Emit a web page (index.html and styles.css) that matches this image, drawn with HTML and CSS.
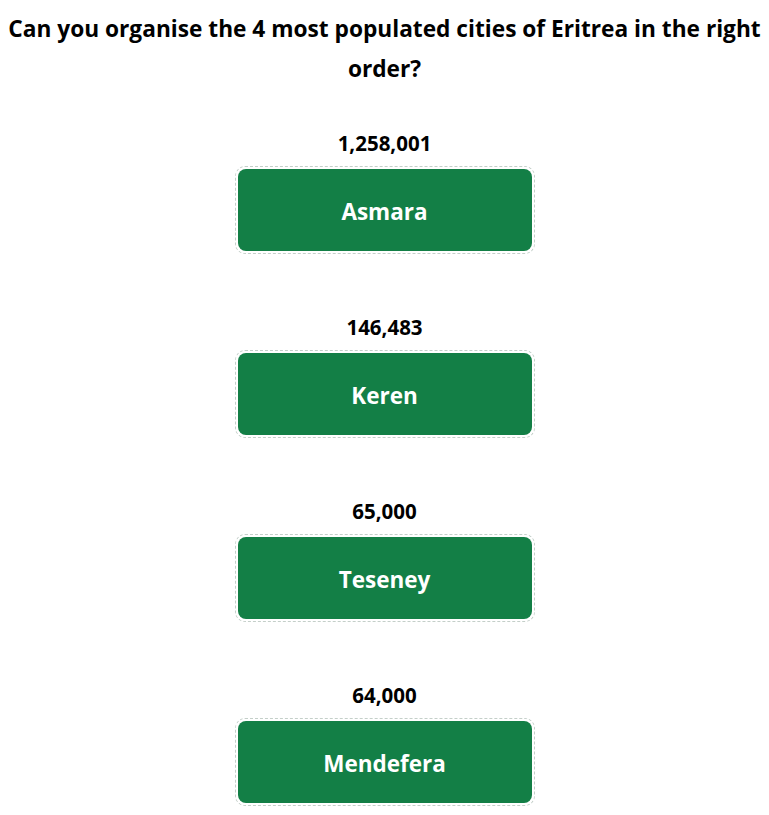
FILE: index.html
```html
<!DOCTYPE html>
<html lang="en">
<head>
    <meta charset="UTF-8">
    <title>Eritrea cities</title>
    <link rel="stylesheet" href="styles.css">
</head>
<body>
    <h2 class="title">Can you organise the 4 most populated cities of Eritrea in the right order?</h2>

    <ul class="list">
        <li class="item">
            <div class="count">1,258,001</div>
            <div class="slot"><div class="city">Asmara</div></div>
        </li>
        <li class="item">
            <div class="count">146,483</div>
            <div class="slot"><div class="city">Keren</div></div>
        </li>
        <li class="item">
            <div class="count">65,000</div>
            <div class="slot"><div class="city">Teseney</div></div>
        </li>
        <li class="item">
            <div class="count">64,000</div>
            <div class="slot"><div class="city">Mendefera</div></div>
        </li>
    </ul>
</body>
</html>
```

FILE: styles.css
```css
* {
    margin: 0;
    padding: 0;
}

li {
    list-style: none;
}

body {
    font-family: "Open Sans", "Noto Sans", sans-serif;
    color: #000;
    background-color: #fff;
}

.title {
    padding-top: 9px;
    font-size: 22.7px;
    line-height: 40px;
    font-weight: 700;
    text-align: center;
}

.list {
    display: flex;
    flex-direction: column;
    align-items: center;
    gap: 61px;
    margin-top: 42px;
}

.item {
    display: flex;
    flex-direction: column;
    align-items: center;
    gap: 11px;
}

.count {
    font-size: 20.5px;
    line-height: 24px;
    font-weight: 700;
}

.slot {
    width: 294px;
    padding: 2px;
    border: 1px dashed #c4cfc9;
    border-radius: 10px;
}

.city {
    height: 82px;
    padding-top: 3px;
    box-sizing: border-box;
    display: flex;
    align-items: center;
    justify-content: center;
    background-color: #137f46;
    border-radius: 8px;
    color: #fff;
    font-size: 22.5px;
    font-weight: 700;
}
```
